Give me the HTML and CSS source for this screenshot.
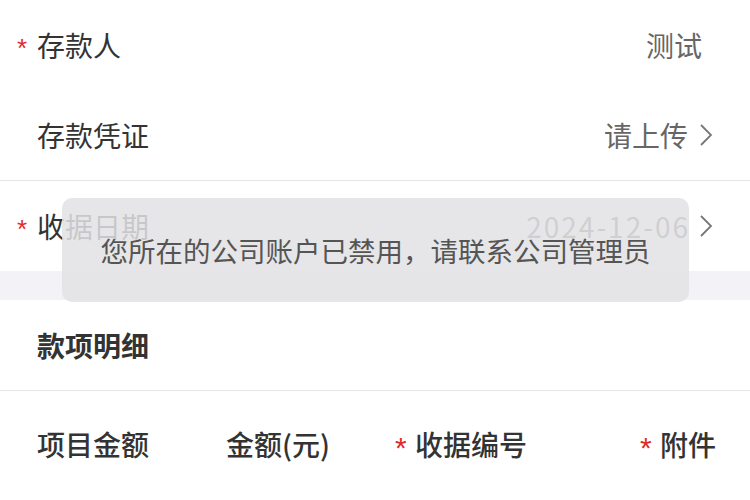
FILE: index.html
```html
<!DOCTYPE html>
<html lang="zh-CN">
<head>
  <meta charset="UTF-8">
  <meta name="viewport" content="width=device-width, initial-scale=1.0">
  <title>存款</title>
  <link rel="stylesheet" href="styles.css">
</head>
<body>
  <main class="page">
    <section class="group">
      <div class="row">
        <span class="star">*</span>
        <span class="label">存款人</span>
        <span class="value value-plain">测试</span>
      </div>
      <div class="row row-line">
        <span class="star"></span>
        <span class="label">存款凭证</span>
        <span class="value">请上传</span>
        <svg class="arrow" viewBox="0 0 14 24"><polyline points="2,2 12,12 2,22"/></svg>
      </div>
      <div class="row">
        <span class="star">*</span>
        <span class="label">收据日期</span>
        <span class="value date">2024-12-06</span>
        <svg class="arrow" viewBox="0 0 14 24"><polyline points="2,2 12,12 2,22"/></svg>
      </div>
    </section>

    <div class="gap"></div>

    <section class="group">
      <div class="row row-line">
        <span class="star"></span>
        <span class="label title">款项明细</span>
      </div>
      <div class="table-head">
        <div class="col col-1">项目金额</div>
        <div class="col col-2">金额(元)</div>
        <div class="col col-3"><span class="star star-big">*</span>收据编号</div>
        <div class="col col-4"><span class="star star-big">*</span>附件</div>
      </div>
    </section>

    <!-- 提示 -->
    <div class="toast">您所在的公司账户已禁用，请联系公司管理员</div>
  </main>
</body>
</html>
```

FILE: styles.css
```css
* {
  margin: 0;
  padding: 0;
  box-sizing: border-box;
}
body {
  background: #fff;
  font-family: "Noto Sans CJK SC", "Noto Sans", sans-serif;
  color: #333;
}
.page {
  position: relative;
  width: 750px;
  height: 500px;
  overflow: hidden;
}
.group {
  background: #fff;
}
.row {
  display: flex;
  align-items: center;
  height: 90px;
  padding: 0 37px 0 17px;
  font-size: 28px;
}
.row-line {
  height: 91px;
  border-bottom: 1px solid #e6e6e6;
}
.star {
  width: 20px;
  color: #e02a2a;
  font-family: "Liberation Sans", Arial, sans-serif;
  font-size: 26px;
  line-height: 1;
  padding-top: 6px;
}
.star-big {
  font-size: 30px;
  padding-top: 8px;
}
.label {
  color: #333;
}
.title {
  font-weight: 700;
}
.value {
  margin-left: auto;
  color: #666;
}
.value-plain {
  margin-right: 11px;
}
.date {
  letter-spacing: 2px;
  margin-right: -2px;
}
.arrow {
  width: 14px;
  height: 24px;
  margin-left: 11px;
  fill: none;
  stroke: #777;
  stroke-width: 1.8;
}
.gap {
  height: 29px;
  background: #f3f3f7;
}
.table-head {
  display: flex;
  align-items: center;
  height: 105px;
  padding-left: 17px;
  font-size: 28px;
  font-weight: 500;
  color: #333;
}
.col {
  display: flex;
  align-items: center;
}
.col-1 {
  width: 209px;
  padding-left: 20px;
}
.col-2 {
  width: 169px;
}
.col-3 {
  width: 245px;
}
.col-4 {
  flex: 1;
}
.toast {
  position: absolute;
  left: 62px;
  top: 198px;
  width: 627px;
  height: 104px;
  display: flex;
  align-items: center;
  justify-content: center;
  border-radius: 10px;
  background: rgba(226, 226, 228, 0.85);
  color: #555;
  font-size: 27.5px;
}
```
